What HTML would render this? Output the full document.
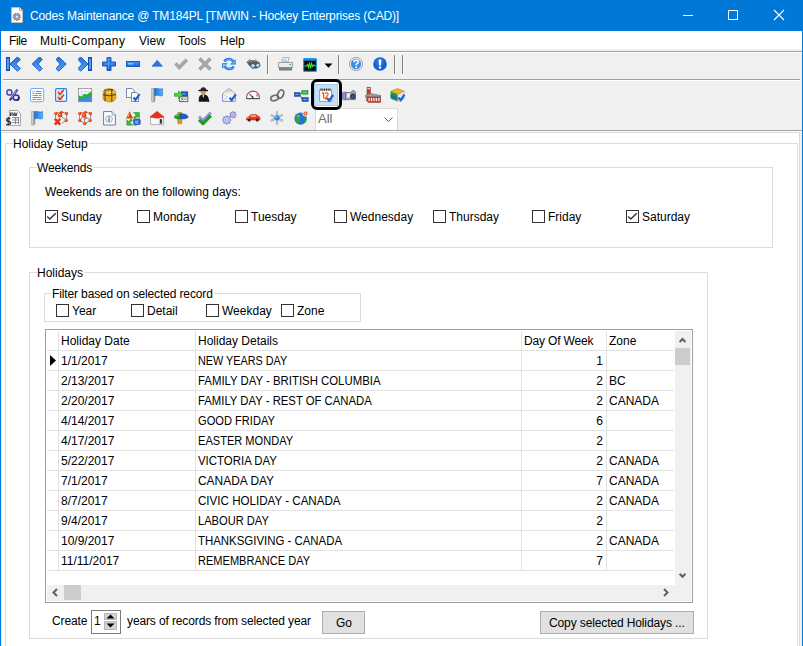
<!DOCTYPE html>
<html><head><meta charset="utf-8"><style>
*{margin:0;padding:0;box-sizing:border-box}
html,body{width:803px;height:646px;overflow:hidden;background:#fff}
body{position:relative;font-family:"Liberation Sans",sans-serif;font-size:12px;line-height:14px;color:#000}
.a{position:absolute;display:block}
.t{position:absolute;white-space:nowrap;line-height:14px}
.gb{position:absolute;border:1px solid #dcdcdc}
.gt{position:absolute;background:#fff;white-space:nowrap;line-height:14px;padding-right:1px}
.cb{position:absolute;width:13px;height:13px;border:1px solid #333;background:#fff}
</style></head><body>
<div class="a" style="left:0px;top:0px;width:803px;height:31px;background:#0078d7"></div>
<svg class="a" style="left:11px;top:7px" width="12" height="16" viewBox="0 0 12 16">
<path d="M0.5 0.5H8.5L11.5 3.5V15.5H0.5Z" fill="#fff" stroke="#c8b8a8"/>
<path d="M8.5 0.5V3.5H11.5" fill="#e4e4e4" stroke="#b0b0b0"/>
<circle cx="5.8" cy="9.8" r="3.4" fill="#a0a0b0" stroke="#70707c" stroke-width="1.4" stroke-dasharray="1.3 1"/>
<circle cx="5.8" cy="9.8" r="2.2" fill="none" stroke="#9a9ad0" stroke-width="0.8"/>
<circle cx="5.8" cy="9.8" r="1" fill="#f4f4f4"/>
</svg>
<div class="t" style="left:30px;top:9px;color:#fff;letter-spacing:-0.16px">Codes Maintenance @ TM184PL [TMWIN - Hockey Enterprises (CAD)]</div>
<div class="a" style="left:683px;top:15px;width:10px;height:1px;background:#fff"></div>
<div class="a" style="left:728px;top:10px;width:10px;height:10px;border:1px solid #fff"></div>
<svg class="a" style="left:773px;top:9px" width="12" height="12" viewBox="0 0 12 12"><path d="M1 1L11 11M11 1L1 11" stroke="#fff" stroke-width="1.1"/></svg>
<div class="a" style="left:0px;top:0px;width:1px;height:646px;background:#0078d7"></div>
<div class="a" style="left:802px;top:0px;width:1px;height:646px;background:#0078d7"></div>
<div class="a" style="left:1px;top:31px;width:801px;height:18px;background:#fff"></div>
<div class="t" style="left:9px;top:34px;letter-spacing:-0.4px">File</div>
<div class="t" style="left:40px;top:34px;letter-spacing:0.35px">Multi-Company</div>
<div class="t" style="left:139px;top:34px;letter-spacing:0px">View</div>
<div class="t" style="left:178px;top:34px;letter-spacing:0px">Tools</div>
<div class="t" style="left:220px;top:34px;letter-spacing:0px">Help</div>
<div class="a" style="left:1px;top:49px;width:801px;height:82px;background:#f0f0f0"></div>
<div class="a" style="left:1px;top:51px;width:801px;height:1px;background:#a0a0a0"></div>
<div class="a" style="left:1px;top:52px;width:801px;height:1px;background:#fff"></div>
<div class="a" style="left:3px;top:79px;width:797px;height:1px;background:#a0a0a0"></div>
<div class="a" style="left:3px;top:80px;width:797px;height:1px;background:#fff"></div>
<div class="a" style="left:1px;top:130px;width:801px;height:1px;background:#a0a0a0"></div>
<div class="a" style="left:1px;top:131px;width:801px;height:1px;background:#fff"></div>
<svg class="a" style="left:6px;top:57px" width="16" height="16" viewBox="0 0 16 16"><defs><linearGradient id="g1" x1="0" y1="0" x2="1" y2="0"><stop offset="0" stop-color="#a8d8ff"/><stop offset="1" stop-color="#7ec4ff"/></linearGradient></defs><rect x="0.5" y="0.5" width="3" height="13" fill="#1f6ad6" stroke="#0d4fb8"/><rect x="1.5" y="2" width="1" height="10" fill="#8fcdf8"/><defs><linearGradient id="g2" x1="0" y1="0" x2="0" y2="1"><stop offset="0" stop-color="#2a72dc"/><stop offset="1" stop-color="#4aa6f8"/></linearGradient></defs><path d="M4 7L11.5 -0.2L14.3 2.5L9.8 7L14.3 11.5L11.5 14.2Z" fill="url(#g2)" stroke="#0d52bf" stroke-width="0.9" stroke-linejoin="round"/></svg>
<svg class="a" style="left:32px;top:57px" width="16" height="16" viewBox="0 0 16 16"><defs><linearGradient id="g3" x1="0" y1="0" x2="0" y2="1"><stop offset="0" stop-color="#2a72dc"/><stop offset="1" stop-color="#4aa6f8"/></linearGradient></defs><path d="M0.2 7L7.6 -0.2L10.2 2.5L6 7L10.2 11.5L7.6 14.2Z" fill="url(#g3)" stroke="#0d52bf" stroke-width="0.9" stroke-linejoin="round"/></svg>
<svg class="a" style="left:56px;top:57px" width="16" height="16" viewBox="0 0 16 16"><defs><linearGradient id="g4" x1="0" y1="0" x2="0" y2="1"><stop offset="0" stop-color="#2a72dc"/><stop offset="1" stop-color="#4aa6f8"/></linearGradient></defs><path d="M10.2 7L2.6 -0.2L0 2.5L4.2 7L0 11.5L2.6 14.2Z" fill="url(#g4)" stroke="#0d52bf" stroke-width="0.9" stroke-linejoin="round"/></svg>
<svg class="a" style="left:78px;top:57px" width="16" height="16" viewBox="0 0 16 16"><defs><linearGradient id="g5" x1="0" y1="0" x2="0" y2="1"><stop offset="0" stop-color="#2a72dc"/><stop offset="1" stop-color="#4aa6f8"/></linearGradient></defs><path d="M10 7L2.6 -0.2L0 2.5L4.2 7L0 11.5L2.6 14.2Z" fill="url(#g5)" stroke="#0d52bf" stroke-width="0.9" stroke-linejoin="round"/><defs><linearGradient id="g6" x1="0" y1="0" x2="1" y2="0"><stop offset="0" stop-color="#a8d8ff"/><stop offset="1" stop-color="#7ec4ff"/></linearGradient></defs><rect x="10.5" y="0.5" width="3" height="13" fill="#1f6ad6" stroke="#0d4fb8"/><rect x="11.5" y="2" width="1" height="10" fill="#8fcdf8"/></svg>
<svg class="a" style="left:102px;top:57px" width="16" height="16" viewBox="0 0 16 16"><defs><linearGradient id="g7" x1="0" y1="0" x2="0" y2="1"><stop offset="0" stop-color="#3d8cf0"/><stop offset="1" stop-color="#1a64d4"/></linearGradient></defs><path d="M5 0.5H9V5H13.5V9H9V13.5H5V9H0.5V5H5Z" fill="url(#g7)" stroke="#0d52bf" stroke-width="0.9"/><path d="M6.5 2V12M2 7H12" stroke="#7cc0ff" stroke-width="0.8" opacity="0.6"/></svg>
<svg class="a" style="left:126px;top:61px" width="16" height="16" viewBox="0 0 16 16"><defs><linearGradient id="g8" x1="0" y1="0" x2="0" y2="1"><stop offset="0" stop-color="#4a9af4"/><stop offset="1" stop-color="#1a64d4"/></linearGradient></defs><rect x="0.5" y="0.5" width="13" height="5" fill="url(#g8)" stroke="#0d52bf" stroke-width="0.9"/><rect x="2" y="2" width="5" height="1.6" fill="#9ccff8" opacity="0.8"/></svg>
<svg class="a" style="left:152px;top:60px" width="16" height="16" viewBox="0 0 16 16"><path d="M5.2 0.3L10.4 6.2H0Z" fill="#2a7ae6" stroke="#1058c8" stroke-width="0.6" stroke-linejoin="round"/></svg>
<svg class="a" style="left:174px;top:58px" width="16" height="16" viewBox="0 0 16 16"><path d="M0.6 6.6L2.8 4.6L5.2 7.2L11.6 0.8L13.8 3L5.2 11.8Z" fill="#a6a6a6" stroke="#9a9a9a" stroke-width="0.5" stroke-linejoin="round"/></svg>
<svg class="a" style="left:198px;top:57px" width="16" height="16" viewBox="0 0 16 16"><path d="M1.5 1.5L12.5 12.5M12.5 1.5L1.5 12.5" stroke="#a6a6a6" stroke-width="3.6"/></svg>
<svg class="a" style="left:222px;top:57px" width="16" height="16" viewBox="0 0 16 16"><path d="M2.4 4.6A4.9 4.9 0 0 1 11.2 4.8" fill="none" stroke="#1a70e0" stroke-width="2.4"/><path d="M2.4 4.6A4.9 4.9 0 0 1 11.2 4.8" fill="none" stroke="#8cc8ff" stroke-width="0.7"/><path d="M13.6 2.2V7.6H8Z" fill="#1a70e0"/><path d="M12.6 4V6.6H10Z" fill="#9cd0ff"/><path d="M11.6 9.4A4.9 4.9 0 0 1 2.8 9.2" fill="none" stroke="#1a70e0" stroke-width="2.4"/><path d="M11.6 9.4A4.9 4.9 0 0 1 2.8 9.2" fill="none" stroke="#8cc8ff" stroke-width="0.7"/><path d="M0.2 11.8V6.2H5.8Z" fill="#1a70e0"/><path d="M1.2 10V7.2H4Z" fill="#c0e4ff"/></svg>
<svg class="a" style="left:246px;top:59px" width="16" height="16" viewBox="0 0 16 16"><path d="M0.5 3L3.5 0.5L7 1.5L9.5 0.5L13.5 3.5L14.5 7L11 9.5L6.5 9.5L3 6.5Z" fill="#5a5a5a"/><path d="M1.5 3L4 1.5L6 3M8 2L10 1.5L12 3" stroke="#b8b8b8" stroke-width="0.9" fill="none"/><circle cx="7" cy="6.8" r="2.3" fill="#b0daf8" stroke="#404040" stroke-width="0.7"/><circle cx="11.8" cy="6.3" r="2.1" fill="#b0daf8" stroke="#404040" stroke-width="0.7"/></svg>
<svg class="a" style="left:278px;top:57px" width="16" height="16" viewBox="0 0 16 16"><path d="M3.5 4L5 0.5H11L10 5Z" fill="#fff" stroke="#9a9a9a" stroke-width="0.7"/><path d="M5.5 1.5H9.5L9 4H5Z" fill="#b8dcf8"/><path d="M0.5 5.5H14.5V10.5H0.5Z" fill="#ececec" stroke="#8a8a8a" stroke-width="0.8"/><path d="M1 10H14V13.5H1Z" fill="#7a7a7a"/><path d="M2 11H13" stroke="#aaa" stroke-width="0.6"/><rect x="11.5" y="7" width="1.6" height="1.2" fill="#30c030"/></svg>
<svg class="a" style="left:303px;top:58px" width="16" height="16" viewBox="0 0 16 16"><rect x="0.6" y="0.6" width="12.8" height="12.8" rx="1" fill="#0a0a0a" stroke="#2196f3" stroke-width="1.2"/><rect x="1.2" y="1.2" width="11.6" height="1.4" fill="#3aa0f8"/><path d="M1.5 8H3.5L4.5 6.5L5.5 9.5L6.5 4.5L7.5 10.5L8.5 5.5L9.5 8.5L10.5 7L12.5 8" fill="none" stroke="#39e639" stroke-width="1.1"/></svg>
<svg class="a" style="left:349px;top:57px" width="16" height="16" viewBox="0 0 16 16"><circle cx="7" cy="7" r="6.6" fill="#f4f4f4" stroke="#8c8c8c" stroke-width="0.8"/><circle cx="7" cy="7" r="5.2" fill="#3f8fe6"/><path d="M4.8 5.2Q5 3.2 7.2 3.2Q9.4 3.3 9.3 5Q9.2 6.2 7.9 6.8Q7.2 7.2 7.2 8.3" fill="none" stroke="#fff" stroke-width="1.6"/><rect x="6.3" y="9.4" width="1.8" height="1.6" fill="#fff"/></svg>
<svg class="a" style="left:373px;top:57px" width="16" height="16" viewBox="0 0 16 16"><circle cx="7" cy="7" r="6.8" fill="#0f60d2"/><circle cx="6.5" cy="5.5" r="4.5" fill="#2a7ce6" opacity="0.6"/><path d="M5.6 2.6H8.4L8 8.4H6Z" fill="#fff"/><rect x="5.8" y="9.6" width="2.4" height="2" fill="#fff"/></svg>
<svg class="a" style="left:324px;top:63px" width="9" height="5" viewBox="0 0 9 5"><path d="M0.5 0.5H8.5L4.5 4.8Z" fill="#000"/></svg>
<div class="a" style="left:267px;top:55px;width:1px;height:19px;background:#808080"></div>
<div class="a" style="left:268px;top:55px;width:1px;height:19px;background:#fafafa"></div>
<div class="a" style="left:338px;top:55px;width:1px;height:19px;background:#808080"></div>
<div class="a" style="left:339px;top:55px;width:1px;height:19px;background:#fafafa"></div>
<div class="a" style="left:394px;top:55px;width:1px;height:19px;background:#808080"></div>
<div class="a" style="left:395px;top:55px;width:1px;height:19px;background:#fafafa"></div>
<div class="a" style="left:402px;top:55px;width:1px;height:19px;background:#808080"></div>
<div class="a" style="left:403px;top:55px;width:1px;height:19px;background:#fafafa"></div>
<div class="a" style="left:315px;top:108px;width:83px;height:22px;background:#fff;border:1px solid #d9d9d9;border-bottom:none"></div>
<div class="t" style="left:318px;top:112px;color:#6d6d6d;font-size:13px">All</div>
<svg class="a" style="left:384px;top:117px" width="10" height="6" viewBox="0 0 10 6"><path d="M0.5 0.5L4.5 4.5L8.5 0.5" fill="none" stroke="#606060" stroke-width="1"/></svg>
<svg class="a" style="left:6px;top:89px" width="16" height="16" viewBox="0 0 16 16"><ellipse cx="3.4" cy="3.4" rx="2.5" ry="2.6" fill="#f0e4f4" stroke="#4a4aa0" stroke-width="1.5"/><ellipse cx="10" cy="8.6" rx="2.9" ry="2.6" fill="#f0e4f4" stroke="#35358a" stroke-width="1.7"/><path d="M11.4 0.6L3.8 11.4" stroke="#3a3a90" stroke-width="2.2"/><path d="M10.6 1.6L5.4 9" stroke="#c8c0f0" stroke-width="0.7"/><path d="M12.8 8.2Q13.6 10.6 11.2 11.8" stroke="#22226a" stroke-width="1.2" fill="none"/></svg>
<svg class="a" style="left:30px;top:88px" width="16" height="16" viewBox="0 0 16 16"><rect x="0.5" y="0.5" width="13.2" height="13.2" rx="1.6" fill="#fff" stroke="#78aaf0" stroke-width="1"/><path d="M2.5 3.5H5M6 3.5H11.5M2.5 5.5H4.5M5.5 5.5H11.5M2.5 7.5H8M9 7.5H11.5M2.5 9.5H11.5M2.5 11.5H6M7 11.5H11.5" stroke="#7a7f88" stroke-width="0.9"/><path d="M2.5 3.5H5M2.5 7.5H4" stroke="#8fd0f0" stroke-width="0.9"/></svg>
<svg class="a" style="left:55px;top:88px" width="16" height="16" viewBox="0 0 16 16"><rect x="0.6" y="0.6" width="11" height="12.8" rx="1.4" fill="#f8f6f4" stroke="#1e86ea" stroke-width="1.2"/><rect x="3" y="3" width="4" height="3.5" fill="none" stroke="#a0a0a0" stroke-width="0.7"/><rect x="3" y="8" width="4" height="3.5" fill="none" stroke="#a0a0a0" stroke-width="0.7"/><path d="M3.2 4.2L5 6.2L9 1.8M3.2 9.2L5 11.2L9 6.8" fill="none" stroke="#e02818" stroke-width="1.5"/></svg>
<svg class="a" style="left:78px;top:88px" width="16" height="16" viewBox="0 0 16 16"><rect x="0.5" y="0.5" width="13.2" height="13.2" fill="#fafaff" stroke="#8c8c8c" stroke-width="0.8"/><path d="M0.5 3.5H13.7M0.5 6.5H13.7M0.5 9.5H13.7M3.5 0.5V13.7M7 0.5V13.7M10.5 0.5V13.7" stroke="#d8d8f0" stroke-width="0.8"/><path d="M0.8 13.8V9.5L3.5 10L6 8.5L9 9L13.8 5.8V13.8Z" fill="#3a8ae0"/><path d="M0.8 11V7.5L3.5 8.5L6 6L9 6.5L13.8 3V7L9 9.5L6 8.5L3.5 10.5Z" fill="#22b422"/></svg>
<svg class="a" style="left:102px;top:88px" width="16" height="16" viewBox="0 0 16 16"><path d="M1.2 3.5Q2 1 7 0.6Q12 0.8 13.6 3.2L14 10.5Q13 13.5 8 14.2Q2.5 13.8 1 11Z" fill="#e8ae1e" stroke="#b88410" stroke-width="0.6"/><path d="M2.5 3.5Q7 5.5 12.5 3.2" stroke="#f8d868" stroke-width="1.2" fill="none"/><path d="M3 1.5V13M9.8 1.2V13.8M1 6.8Q7 9 14 6.5" stroke="#3a3018" stroke-width="0.9" fill="none"/><path d="M4 2.5Q7 0.8 11 2" stroke="#3a3018" stroke-width="0.8" fill="none"/></svg>
<svg class="a" style="left:126px;top:88px" width="16" height="16" viewBox="0 0 16 16"><path d="M0.5 0.5H6L8.2 2.7V9.5H0.5Z" fill="#fff" stroke="#6a78a0" stroke-width="0.9"/><path d="M5.5 4.5H10.5L12.5 6.5V13.5H5.5Z" fill="#fff" stroke="#6a78a0" stroke-width="0.9"/><path d="M7.5 9.5L9.5 12L13.6 6.2" fill="none" stroke="#1862d6" stroke-width="2.2"/></svg>
<svg class="a" style="left:151px;top:88px" width="16" height="16" viewBox="0 0 16 16"><defs><linearGradient id="g9" x1="0" y1="0" x2="1" y2="0"><stop offset="0" stop-color="#f0f0f0"/><stop offset="1" stop-color="#808080"/></linearGradient></defs><defs><linearGradient id="g10" x1="0" y1="0" x2="1" y2="0"><stop offset="0" stop-color="#1a74e0"/><stop offset="1" stop-color="#58b0ff"/></linearGradient></defs><rect x="0.4" y="0.4" width="3.4" height="13.4" rx="0.8" fill="url(#g9)" stroke="#8a8a8a" stroke-width="0.6"/><path d="M3.6 0.6Q6 0 8 0.8Q10 1.4 11.6 0.6V7.6Q10 8.4 8 7.6Q6 6.8 3.6 8Z" fill="url(#g10)" stroke="#1a62c8" stroke-width="0.5"/></svg>
<svg class="a" style="left:174px;top:91px" width="16" height="16" viewBox="0 0 16 16"><rect x="7.2" y="0.8" width="6.6" height="4.4" fill="#1e5ac8" stroke="#10409a" stroke-width="0.6"/><rect x="7.5" y="2" width="4.5" height="2" fill="#3a84e8"/><rect x="5.4" y="5.8" width="8.4" height="4.8" fill="#fafafa" stroke="#646464" stroke-width="1"/><path d="M7 7L9.5 9.5M9.5 7L7 9.5M10 8.2H12.5" stroke="#505050" stroke-width="0.8"/><path d="M0.4 2.4H4.6V0L8.6 3.8L4.6 7.6V5.2H0.4Z" fill="#4ad83a" stroke="#18a018" stroke-width="0.7"/></svg>
<svg class="a" style="left:198px;top:87px" width="16" height="16" viewBox="0 0 16 16"><ellipse cx="5.2" cy="3.6" rx="5" ry="1" fill="#1a1a1a"/><path d="M2.4 3.8Q2.4 0.3 5.4 0.3Q8.4 0.4 8.4 3.8Z" fill="#262626"/><path d="M2.8 4.2H7.8Q8 8 5.3 8.4Q2.6 8 2.8 4.2Z" fill="#c89e68"/><path d="M0.8 14.8V11Q1.2 8 4 7.4L5.3 9L6.6 7.4Q10 8 10.6 11.5L11.5 14.8Z" fill="#141414"/><path d="M4.2 8.4L5.3 11L6.2 8.4" fill="#f0f0f0"/></svg>
<svg class="a" style="left:222px;top:88px" width="16" height="16" viewBox="0 0 16 16"><path d="M0.6 5.6L7 0.6L13.4 5.6V13.4H0.6Z" fill="#f4f4ff" stroke="#8c8ce0" stroke-width="1"/><path d="M2 5L7 1.6L12 5Z" fill="#b8d8f8"/><rect x="2.6" y="3.6" width="8.8" height="2.6" fill="#f8f0a0"/><path d="M0.8 13.2L5.5 8.6M0.8 6L5 9" stroke="#c0b8e8" stroke-width="0.8"/><path d="M7.6 9.8L9.6 12.2L13.8 6.4" fill="none" stroke="#1862d6" stroke-width="2.2"/></svg>
<svg class="a" style="left:246px;top:90px" width="16" height="16" viewBox="0 0 16 16"><path d="M0.6 8.5V7.5A6.4 6.4 0 0 1 13.4 7.5V8.5Z" fill="#fdfdfd" stroke="#6c6c6c" stroke-width="1.1"/><path d="M0.6 8.6H13.4" stroke="#505050" stroke-width="1.2"/><path d="M3.5 4L6.8 7.4" stroke="#f04010" stroke-width="1.3"/><path d="M6 6.6L7.2 7.8" stroke="#202020" stroke-width="1.4"/><path d="M10.6 4.2L11.4 6.5" stroke="#f04010" stroke-width="1.1"/></svg>
<svg class="a" style="left:270px;top:89px" width="16" height="16" viewBox="0 0 16 16"><ellipse cx="4.6" cy="9" rx="4" ry="2.6" transform="rotate(-20 4.6 9)" fill="none" stroke="#707070" stroke-width="1.8"/><ellipse cx="10.6" cy="5.2" rx="2.8" ry="4.4" transform="rotate(25 10.6 5.2)" fill="none" stroke="#6a6a6a" stroke-width="1.8"/><path d="M3 8.3Q4.5 7.4 6 7.8M9.6 2.6Q11 1.6 12 2.6" stroke="#e8e8e8" stroke-width="0.8" fill="none"/><circle cx="11.5" cy="4" r="1" fill="#f8f4d0"/></svg>
<svg class="a" style="left:294px;top:90px" width="16" height="16" viewBox="0 0 16 16"><rect x="0.3" y="2.6" width="5.6" height="3.8" fill="#1a58c0" stroke="#103c90" stroke-width="0.5"/><rect x="7.8" y="0.4" width="6.2" height="3.8" fill="#30c030" stroke="#188818" stroke-width="0.5"/><rect x="8" y="7.6" width="6.2" height="3.8" fill="#1a58c0" stroke="#103c90" stroke-width="0.5"/><path d="M1.5 4.5H4.5M9 2.3H12.5M9.2 9.5H12.8" stroke="#8ab8f0" stroke-width="0.9"/><path d="M5.9 4.4L7.8 2.3M5.9 4.6L8 9.2" stroke="#303860" stroke-width="0.8" fill="none"/></svg>
<div class="a" style="left:311px;top:79px;width:31px;height:31px;border:3px solid #000;border-radius:6px;background:#fff"></div>
<div class="a" style="left:314px;top:84px;width:24px;height:22px;background:#c8def5;border:1px solid #9ccaf2"></div>
<svg class="a" style="left:319px;top:88px" width="16" height="16" viewBox="0 0 16 16"><path d="M0.6 1.6H12.6V13.4H0.6Z" fill="#fcfcff" stroke="#8a88c8" stroke-width="0.9"/><path d="M2 0.4V3M3.8 0.4V3M5.6 0.4V3M7.4 0.4V3M9.2 0.4V3M11 0.4V3" stroke="#282828" stroke-width="0.8"/><path d="M3 5H4.6V10.5M6.2 5.6Q7 4.8 8.2 5Q9.4 5.4 9 6.8L6.2 10.5H9.6" fill="none" stroke="#f45a10" stroke-width="1.3"/><path d="M8 10.2L10.2 12.6L14.2 7" fill="none" stroke="#1862d6" stroke-width="2.2"/></svg>
<svg class="a" style="left:342px;top:90px" width="16" height="16" viewBox="0 0 16 16"><rect x="0.4" y="2.2" width="4.4" height="7.6" rx="1.2" fill="#8c8cd8" stroke="#6060a0" stroke-width="0.6"/><path d="M3.5 2.5H9L10 0.8H12.5L13.5 2.5V9.6H3.5Z" fill="#a8a8b0" stroke="#5c5c68" stroke-width="0.7"/><rect x="5" y="3.5" width="3.5" height="4" fill="#f4f4f4"/><circle cx="10.8" cy="6.4" r="2.8" fill="#303048" stroke="#707080" stroke-width="0.8"/><circle cx="10.8" cy="6.4" r="1.2" fill="#4a50c8"/></svg>
<svg class="a" style="left:365px;top:87px" width="16" height="16" viewBox="0 0 16 16"><rect x="2" y="0.4" width="3.4" height="7" fill="#c83c30" stroke="#8a2010" stroke-width="0.5"/><rect x="2.4" y="1" width="2.6" height="1.2" fill="#f0d0c8"/><path d="M0.2 8.2L5.5 6.5L16 8.5L15.6 10.4L0.6 10Z" fill="#9a9a9a" stroke="#606060" stroke-width="0.5"/><path d="M1.6 10H15.6V15.6H3.6L1.6 14Z" fill="#c84838" stroke="#8a2818" stroke-width="0.5"/><path d="M4.2 11V14M6.6 11V14M9 11V14M11.4 11V14M13.8 11V14" stroke="#fff0f0" stroke-width="1.2"/></svg>
<svg class="a" style="left:390px;top:88px" width="16" height="16" viewBox="0 0 16 16"><path d="M0.6 3.6L7.4 0.6L14.2 3.2L7.8 6.4Z" fill="#f0b818" stroke="#b08010" stroke-width="0.6"/><path d="M0.6 3.6L7.8 6.4V13.6L0.6 10.8Z" fill="#1e9a3a"/><path d="M0.6 6.6L7.8 9.4V11.6L0.6 8.8Z" fill="#1a60c8"/><path d="M7.8 6.4L14.2 3.2V10.8L7.8 13.6Z" fill="#e4e4e4" stroke="#a0a0a0" stroke-width="0.5"/><path d="M8.6 9.6L10.8 12.2L14.4 6.6" fill="none" stroke="#1862d6" stroke-width="2.2"/></svg>
<svg class="a" style="left:5px;top:110px" width="16" height="16" viewBox="0 0 16 16"><path d="M4.5 0.5H12.5L15.6 3.6V15.4H4.5Z" fill="#fff" stroke="#8a8a8a" stroke-width="0.8"/><path d="M5.5 2.5V6M7 6V2.5L9.2 6V2.5M9.8 2.5L11 6L12.2 2.5" fill="none" stroke="#3a3a3a" stroke-width="1"/><path d="M7 7.5H14M7 10H14M7 12.6H14M10.5 7.5V14M13.5 7.5V14" stroke="#70809a" stroke-width="0.9"/><path d="M8 7.6H13" stroke="#40c040" stroke-width="1"/><path d="M5.5 8.5Q1.5 8 1.5 10Q1.5 11.5 4 11.6Q6 11.8 5.8 13.4Q5.5 15 1 14.6M3.2 7V15.8" fill="none" stroke="#2a2a2a" stroke-width="1.1"/></svg>
<svg class="a" style="left:31px;top:111px" width="16" height="16" viewBox="0 0 16 16"><defs><linearGradient id="g9" x1="0" y1="0" x2="1" y2="0"><stop offset="0" stop-color="#f0f0f0"/><stop offset="1" stop-color="#808080"/></linearGradient></defs><defs><linearGradient id="g10" x1="0" y1="0" x2="1" y2="0"><stop offset="0" stop-color="#1a74e0"/><stop offset="1" stop-color="#58b0ff"/></linearGradient></defs><rect x="0.4" y="0.4" width="3.4" height="13.4" rx="0.8" fill="url(#g9)" stroke="#8a8a8a" stroke-width="0.6"/><path d="M3.6 0.6Q6 0 8 0.8Q10 1.4 11.6 0.6V7.6Q10 8.4 8 7.6Q6 6.8 3.6 8Z" fill="url(#g10)" stroke="#1a62c8" stroke-width="0.5"/></svg>
<svg class="a" style="left:54px;top:111px" width="16" height="16" viewBox="0 0 16 16"><path d="M1.6 2.4L7.5 1L12.6 2.4V9.4L8 12M1.6 2.4V8M6 4.5L12.6 9.4M7.5 1V4" fill="none" stroke="#8c8c8c" stroke-width="1"/><circle cx="1.8" cy="2.4" r="1.7" fill="#ea3a10"/><circle cx="1.4" cy="1.9" r="0.765" fill="#ffa028"/><circle cx="7.5" cy="1.2" r="1.4" fill="#ea3a10"/><circle cx="7.1" cy="0.7" r="0.63" fill="#ffa028"/><circle cx="12.4" cy="2.4" r="1.7" fill="#ea3a10"/><circle cx="12.0" cy="1.9" r="0.765" fill="#ffa028"/><circle cx="6" cy="4.3" r="2.2" fill="#ea3a10"/><circle cx="5.6" cy="3.8" r="0.9900000000000001" fill="#ffa028"/><circle cx="12.2" cy="9.4" r="1.6" fill="#ea3a10"/><circle cx="11.799999999999999" cy="8.9" r="0.7200000000000001" fill="#ffa028"/><path d="M0.8 7.8L6.2 13.6M6.2 7.8L0.8 13.6" stroke="#e83410" stroke-width="2.6"/></svg>
<svg class="a" style="left:78px;top:111px" width="16" height="16" viewBox="0 0 16 16"><path d="M1.6 2.4L7.5 1L12.6 2.4V9.4L6.8 12.6L1.6 9.4Z M6 4.3L6.8 12.6M6 4.3L12.6 9.4M6 4.3L1.6 9.4M7.5 1V4" fill="none" stroke="#8c8c8c" stroke-width="1"/><circle cx="1.8" cy="2.4" r="1.7" fill="#ea3a10"/><circle cx="1.4" cy="1.9" r="0.765" fill="#ffa028"/><circle cx="7.5" cy="1.2" r="1.4" fill="#ea3a10"/><circle cx="7.1" cy="0.7" r="0.63" fill="#ffa028"/><circle cx="12.4" cy="2.4" r="1.7" fill="#ea3a10"/><circle cx="12.0" cy="1.9" r="0.765" fill="#ffa028"/><circle cx="6" cy="4.3" r="2.2" fill="#ea3a10"/><circle cx="5.6" cy="3.8" r="0.9900000000000001" fill="#ffa028"/><circle cx="1.8" cy="9.4" r="1.6" fill="#ea3a10"/><circle cx="1.4" cy="8.9" r="0.7200000000000001" fill="#ffa028"/><circle cx="12.2" cy="9.4" r="1.6" fill="#ea3a10"/><circle cx="11.799999999999999" cy="8.9" r="0.7200000000000001" fill="#ffa028"/><circle cx="6.8" cy="12.6" r="1.7" fill="#ea3a10"/><circle cx="6.3999999999999995" cy="12.1" r="0.765" fill="#ffa028"/><circle cx="7.6" cy="7.2" r="1" fill="#ea3a10"/><circle cx="7.199999999999999" cy="6.7" r="0.45" fill="#ffa028"/></svg>
<svg class="a" style="left:103px;top:111px" width="16" height="16" viewBox="0 0 16 16"><path d="M0.6 0.6H9L12.4 4V14H0.6Z" fill="#fff" stroke="#6c7ca0" stroke-width="1"/><path d="M9 0.6V4H12.4" fill="#d8e8f8" stroke="#6c7ca0" stroke-width="0.6"/><circle cx="6" cy="8" r="3.4" fill="#f4f4f4" stroke="#a8a8a8" stroke-width="0.9"/><rect x="5.3" y="5.6" width="1.5" height="1.2" fill="#2a86e8"/><rect x="5.3" y="7.4" width="1.5" height="3" fill="#2a86e8"/></svg>
<svg class="a" style="left:126px;top:111px" width="16" height="16" viewBox="0 0 16 16"><path d="M3.6 0.2L7 7.6H0Z" fill="#e83418"/><path d="M3.2 2.5L1.8 6.5" stroke="#f8c060" stroke-width="1"/><path d="M7.4 1.5H13.4V7L11.8 5.4L8.8 8L7.4 6.5L10.2 4Z" fill="#30c030" stroke="#208820" stroke-width="0.5"/><path d="M6.8 14.2H0.8V8.8L2.4 10.4L5.2 7.8L6.6 9.2L4 11.8Z" fill="#30c030" stroke="#208820" stroke-width="0.5"/><path d="M7.6 8.6L13 7.8L14.2 8.8V13.2L8.6 14.2L7.6 13.2Z" fill="#2a66d8" stroke="#1a3c98" stroke-width="0.6"/><rect x="9" y="9.6" width="3.4" height="3.2" fill="#6aa4f0"/></svg>
<svg class="a" style="left:150px;top:111px" width="16" height="16" viewBox="0 0 16 16"><path d="M0.6 5.6H13.6V13.6H0.6Z" fill="#eeeeee" stroke="#a0a0a0" stroke-width="0.8"/><path d="M1 6.5H8V13H1Z" fill="#fafafa"/><path d="M0 6L7 0.3L14 6L7 7.2Z" fill="#e8321a" stroke="#c02010" stroke-width="0.5"/><rect x="9.8" y="8.2" width="2.2" height="4.4" fill="#383838"/></svg>
<svg class="a" style="left:174px;top:112px" width="16" height="16" viewBox="0 0 16 16"><rect x="3.8" y="0.2" width="4" height="11.6" rx="0.6" fill="#d89a20" stroke="#9a6a10" stroke-width="0.5"/><path d="M0 5.6Q0.6 2.8 3.6 2.4L6.6 2.2L6.4 6.6Q3 7.6 0 5.6Z" fill="#1aa028" stroke="#107018" stroke-width="0.5"/><path d="M6 2Q9.6 1.4 12 2.6Q14.2 3.8 14.2 5.4Q11 7.4 6.4 6.8Z" fill="#1a60d0" stroke="#10409a" stroke-width="0.5"/><path d="M1.5 4Q3 3 5 3.2" stroke="#70e070" stroke-width="0.8" fill="none"/></svg>
<svg class="a" style="left:198px;top:111px" width="16" height="16" viewBox="0 0 16 16"><path d="M1 5.6L5 9.4L12.8 1.4" fill="none" stroke="#9a90e0" stroke-width="2.8" stroke-linejoin="round"/><path d="M1 8.8L5 12.6L12.8 4.6" fill="none" stroke="#1aa01a" stroke-width="3.2" stroke-linejoin="round"/></svg>
<svg class="a" style="left:222px;top:111px" width="16" height="16" viewBox="0 0 16 16"><path d="M9.20 9.00L7.73 10.21L7.91 12.11L6.01 11.93L4.80 13.40L3.59 11.93L1.69 12.11L1.87 10.21L0.40 9.00L1.87 7.79L1.69 5.89L3.59 6.07L4.80 4.60L6.01 6.07L7.91 5.89L7.73 7.79Z" fill="#c8d4f4" stroke="#6a70c0" stroke-width="0.9" stroke-linejoin="round"/><circle cx="4.8" cy="9" r="1.4080000000000001" fill="#f0f0f0" stroke="#6a70c0" stroke-width="0.6"/><path d="M14.40 3.80L13.21 4.86L13.12 6.46L11.54 6.19L10.24 7.11L9.47 5.71L7.94 5.28L8.55 3.80L7.94 2.32L9.47 1.89L10.24 0.49L11.54 1.41L13.12 1.14L13.21 2.74Z" fill="#c8d4f4" stroke="#6a70c0" stroke-width="0.9" stroke-linejoin="round"/><circle cx="11" cy="3.8" r="1.088" fill="#f0f0f0" stroke="#6a70c0" stroke-width="0.6"/></svg>
<svg class="a" style="left:246px;top:114px" width="16" height="16" viewBox="0 0 16 16"><path d="M0.3 4.6Q0.6 3 3 2.4L5.2 0.6H10L12.4 2.2Q14 2.6 14 4.2V6H0.3Z" fill="#ee3416" stroke="#b01c08" stroke-width="0.5"/><path d="M5.4 1.2L4.4 2.8H10.6L9.6 1.2Z" fill="#ffc4b0"/><path d="M1 3.8H3" stroke="#ffd0c0" stroke-width="0.8"/><circle cx="3.2" cy="6" r="1.6" fill="#2a2a2a"/><circle cx="11.2" cy="6" r="1.6" fill="#2a2a2a"/></svg>
<svg class="a" style="left:270px;top:111px" width="16" height="16" viewBox="0 0 16 16"><path d="M7 0.2V13.8M0.8 4L13 10M13 3.6L0.8 10" stroke="#989ea8" stroke-width="2.2"/><path d="M7 0.2V13.8M0.8 4L13 10M13 3.6L0.8 10" stroke="#f4f4f4" stroke-width="0.7"/><circle cx="7" cy="6.8" r="2.6" fill="#1e86f0"/><circle cx="6.4" cy="6.2" r="1" fill="#8ccaff"/></svg>
<svg class="a" style="left:294px;top:111px" width="16" height="16" viewBox="0 0 16 16"><circle cx="6.6" cy="7.6" r="6.2" fill="#2a70d8"/><path d="M1.6 4.6Q3.6 2.8 5.6 4Q6.6 5.2 5.4 7Q6.8 8.4 6.4 10.4Q5.2 12.6 3.2 11.8Q1 9.6 1.2 6Z" fill="#28a830"/><path d="M8.2 2Q11 2.4 12.2 5L11 6.2L9.4 5.4Z M10 9Q11.6 8.6 12.4 9.8Q11.4 12.2 9.6 12.6Z" fill="#28a830"/><circle cx="4.5" cy="5" r="1.5" fill="#80c8ff" opacity="0.5"/><circle cx="11.4" cy="2.6" r="2.5" fill="#e85a38" stroke="#f8f8f8" stroke-width="0.8"/><circle cx="11.4" cy="2.6" r="1" fill="#ffc0a0"/></svg>
<div class="a" style="left:2px;top:132px;width:798px;height:1px;background:#dadada"></div>
<div class="a" style="left:799px;top:132px;width:1px;height:514px;background:#dadada"></div>
<div class="a" style="left:1px;top:132px;width:1px;height:514px;background:#e6e6e6"></div>
<div class="a" style="left:800px;top:132px;width:2px;height:514px;background:#f0f0f0"></div>
<div class="gb" style="left:5px;top:143px;width:793px;height:600px"></div>
<div class="gt" style="left:13px;top:137px;letter-spacing:0px">Holiday Setup</div>
<div class="gb" style="left:29px;top:167px;width:744px;height:81px"></div>
<div class="gt" style="left:37px;top:161px;letter-spacing:-0.18px">Weekends</div>
<div class="t" style="left:45px;top:185px;">Weekends are on the following days:</div>
<div class="cb" style="left:45px;top:210px"></div>
<svg class="a" style="left:45px;top:210px" width="13" height="13" viewBox="0 0 13 13"><path d="M2.2 6.6L4.8 9.1L10.8 3.3" fill="none" stroke="#333" stroke-width="1.45"/></svg>
<div class="t" style="left:61px;top:210px;">Sunday</div>
<div class="cb" style="left:137px;top:210px"></div>
<div class="t" style="left:153px;top:210px;">Monday</div>
<div class="cb" style="left:235px;top:210px"></div>
<div class="t" style="left:251px;top:210px;">Tuesday</div>
<div class="cb" style="left:334px;top:210px"></div>
<div class="t" style="left:350px;top:210px;">Wednesday</div>
<div class="cb" style="left:433px;top:210px"></div>
<div class="t" style="left:449px;top:210px;">Thursday</div>
<div class="cb" style="left:532px;top:210px"></div>
<div class="t" style="left:548px;top:210px;">Friday</div>
<div class="cb" style="left:626px;top:210px"></div>
<svg class="a" style="left:626px;top:210px" width="13" height="13" viewBox="0 0 13 13"><path d="M2.2 6.6L4.8 9.1L10.8 3.3" fill="none" stroke="#333" stroke-width="1.45"/></svg>
<div class="t" style="left:642px;top:210px;">Saturday</div>
<div class="gb" style="left:29px;top:272px;width:679px;height:367px"></div>
<div class="gt" style="left:37px;top:266px;letter-spacing:0px">Holidays</div>
<div class="gb" style="left:44px;top:293px;width:317px;height:29px"></div>
<div class="gt" style="left:52px;top:287px;letter-spacing:-0.13px">Filter based on selected record</div>
<div class="cb" style="left:56px;top:304px"></div>
<div class="t" style="left:72px;top:304px;">Year</div>
<div class="cb" style="left:131px;top:304px"></div>
<div class="t" style="left:147px;top:304px;">Detail</div>
<div class="cb" style="left:206px;top:304px"></div>
<div class="t" style="left:222px;top:304px;">Weekday</div>
<div class="cb" style="left:281px;top:304px"></div>
<div class="t" style="left:297px;top:304px;">Zone</div>
<div class="a" style="left:45px;top:329px;width:648px;height:274px;border:1px solid #a0a0a0;background:#fff"></div>
<div class="a" style="left:47px;top:350px;width:627px;height:1px;background:#e2e2e2"></div>
<div class="a" style="left:47px;top:370px;width:627px;height:1px;background:#e2e2e2"></div>
<div class="a" style="left:47px;top:390px;width:627px;height:1px;background:#e2e2e2"></div>
<div class="a" style="left:47px;top:410px;width:627px;height:1px;background:#e2e2e2"></div>
<div class="a" style="left:47px;top:430px;width:627px;height:1px;background:#e2e2e2"></div>
<div class="a" style="left:47px;top:450px;width:627px;height:1px;background:#e2e2e2"></div>
<div class="a" style="left:47px;top:470px;width:627px;height:1px;background:#e2e2e2"></div>
<div class="a" style="left:47px;top:490px;width:627px;height:1px;background:#e2e2e2"></div>
<div class="a" style="left:47px;top:510px;width:627px;height:1px;background:#e2e2e2"></div>
<div class="a" style="left:47px;top:530px;width:627px;height:1px;background:#e2e2e2"></div>
<div class="a" style="left:47px;top:550px;width:627px;height:1px;background:#e2e2e2"></div>
<div class="a" style="left:47px;top:570px;width:627px;height:1px;background:#e2e2e2"></div>
<div class="a" style="left:58px;top:331px;width:1px;height:240px;background:#e2e2e2"></div>
<div class="a" style="left:195px;top:331px;width:1px;height:240px;background:#e2e2e2"></div>
<div class="a" style="left:521px;top:331px;width:1px;height:240px;background:#e2e2e2"></div>
<div class="a" style="left:606px;top:331px;width:1px;height:240px;background:#e2e2e2"></div>
<div class="t" style="left:61px;top:334px;">Holiday Date</div>
<div class="t" style="left:198px;top:334px;">Holiday Details</div>
<div class="t" style="left:524px;top:334px;letter-spacing:-0.17px">Day Of Week</div>
<div class="t" style="left:609px;top:334px;">Zone</div>
<div class="t" style="left:61px;top:354px;">1/1/2017</div>
<div class="t" style="left:198px;top:354px;transform:scaleX(0.902);transform-origin:0 0">NEW YEARS DAY</div>
<div class="t" style="left:522px;top:354px;width:81px;text-align:right">1</div>
<div class="t" style="left:61px;top:374px;">2/13/2017</div>
<div class="t" style="left:198px;top:374px;transform:scaleX(0.948);transform-origin:0 0">FAMILY DAY - BRITISH COLUMBIA</div>
<div class="t" style="left:522px;top:374px;width:81px;text-align:right">2</div>
<div class="t" style="left:609px;top:374px;">BC</div>
<div class="t" style="left:61px;top:394px;">2/20/2017</div>
<div class="t" style="left:198px;top:394px;transform:scaleX(0.943);transform-origin:0 0">FAMILY DAY - REST OF CANADA</div>
<div class="t" style="left:522px;top:394px;width:81px;text-align:right">2</div>
<div class="t" style="left:609px;top:394px;">CANADA</div>
<div class="t" style="left:61px;top:414px;">4/14/2017</div>
<div class="t" style="left:198px;top:414px;transform:scaleX(0.925);transform-origin:0 0">GOOD FRIDAY</div>
<div class="t" style="left:522px;top:414px;width:81px;text-align:right">6</div>
<div class="t" style="left:61px;top:434px;">4/17/2017</div>
<div class="t" style="left:198px;top:434px;transform:scaleX(0.922);transform-origin:0 0">EASTER MONDAY</div>
<div class="t" style="left:522px;top:434px;width:81px;text-align:right">2</div>
<div class="t" style="left:61px;top:454px;">5/22/2017</div>
<div class="t" style="left:198px;top:454px;transform:scaleX(0.952);transform-origin:0 0">VICTORIA DAY</div>
<div class="t" style="left:522px;top:454px;width:81px;text-align:right">2</div>
<div class="t" style="left:609px;top:454px;">CANADA</div>
<div class="t" style="left:61px;top:474px;">7/1/2017</div>
<div class="t" style="left:198px;top:474px;transform:scaleX(0.995);transform-origin:0 0">CANADA DAY</div>
<div class="t" style="left:522px;top:474px;width:81px;text-align:right">7</div>
<div class="t" style="left:609px;top:474px;">CANADA</div>
<div class="t" style="left:61px;top:494px;">8/7/2017</div>
<div class="t" style="left:198px;top:494px;transform:scaleX(0.966);transform-origin:0 0">CIVIC HOLIDAY - CANADA</div>
<div class="t" style="left:522px;top:494px;width:81px;text-align:right">2</div>
<div class="t" style="left:609px;top:494px;">CANADA</div>
<div class="t" style="left:61px;top:514px;">9/4/2017</div>
<div class="t" style="left:198px;top:514px;transform:scaleX(0.926);transform-origin:0 0">LABOUR DAY</div>
<div class="t" style="left:522px;top:514px;width:81px;text-align:right">2</div>
<div class="t" style="left:61px;top:534px;">10/9/2017</div>
<div class="t" style="left:198px;top:534px;transform:scaleX(0.952);transform-origin:0 0">THANKSGIVING - CANADA</div>
<div class="t" style="left:522px;top:534px;width:81px;text-align:right">2</div>
<div class="t" style="left:609px;top:534px;">CANADA</div>
<div class="t" style="left:61px;top:554px;">11/11/2017</div>
<div class="t" style="left:198px;top:554px;transform:scaleX(0.92);transform-origin:0 0">REMEMBRANCE DAY</div>
<div class="t" style="left:522px;top:554px;width:81px;text-align:right">7</div>
<svg class="a" style="left:50px;top:355px" width="7" height="12" viewBox="0 0 7 12"><path d="M0 0L6 5.5L0 11Z" fill="#000"/></svg>
<div class="a" style="left:675px;top:331px;width:16px;height:270px;background:#f0f0f0"></div>
<div class="a" style="left:675px;top:348px;width:15px;height:17px;background:#cdcdcd"></div>
<svg class="a" style="left:678px;top:336px" width="10" height="8" viewBox="0 0 10 8"><path d="M1.6 6L4.5 3L7.4 6" fill="none" stroke="#606060" stroke-width="2"/></svg>
<svg class="a" style="left:678px;top:572px" width="10" height="8" viewBox="0 0 10 8"><path d="M1.6 1.8L4.5 4.8L7.4 1.8" fill="none" stroke="#606060" stroke-width="2"/></svg>
<div class="a" style="left:47px;top:585px;width:644px;height:16px;background:#f0f0f0"></div>
<div class="a" style="left:64px;top:585px;width:17px;height:15px;background:#cdcdcd"></div>
<svg class="a" style="left:51px;top:588px" width="8" height="10" viewBox="0 0 8 10"><path d="M6 1L2.5 4.5L6 8" fill="none" stroke="#606060" stroke-width="2"/></svg>
<svg class="a" style="left:662px;top:588px" width="8" height="10" viewBox="0 0 8 10"><path d="M2 1L5.5 4.5L2 8" fill="none" stroke="#606060" stroke-width="2"/></svg>
<div class="t" style="left:52px;top:614px;letter-spacing:-0.14px">Create</div>
<div class="a" style="left:91px;top:610px;width:30px;height:24px;border:1px solid #7a7a7a;background:#fff"></div>
<div class="t" style="left:94px;top:614px;">1</div>
<div class="a" style="left:104px;top:613px;width:13px;height:7px;background:#d4d4d4;border:1px solid #b8b8b8"></div>
<div class="a" style="left:104px;top:621px;width:13px;height:9px;background:#d4d4d4;border:1px solid #b8b8b8"></div>
<svg class="a" style="left:106px;top:614px" width="9" height="5" viewBox="0 0 9 5"><path d="M0.5 4.5L4.5 0.5L8.5 4.5Z" fill="#000"/></svg>
<svg class="a" style="left:106px;top:623px" width="9" height="5" viewBox="0 0 9 5"><path d="M0.5 0.5L4.5 4.5L8.5 0.5Z" fill="#000"/></svg>
<div class="t" style="left:127px;top:614px;letter-spacing:-0.12px">years of records from selected year</div>
<div class="a" style="left:322px;top:611px;width:43px;height:23px;border:1px solid #adadad;background:#e1e1e1"></div>
<div class="t" style="left:336px;top:616px;">Go</div>
<div class="a" style="left:540px;top:611px;width:154px;height:23px;border:1px solid #adadad;background:#e1e1e1"></div>
<div class="t" style="left:549px;top:616px;letter-spacing:-0.12px">Copy selected Holidays ...</div>
</body></html>
